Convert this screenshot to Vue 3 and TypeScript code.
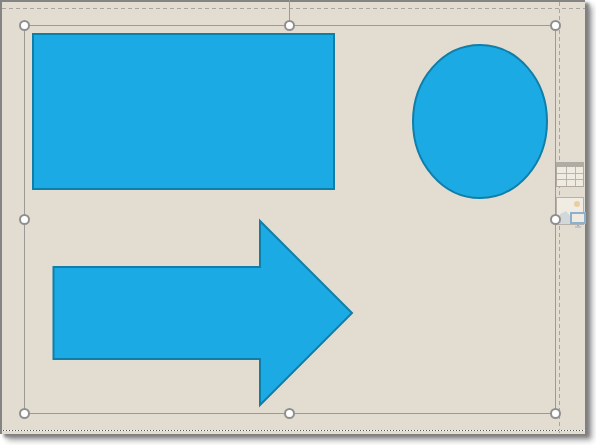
<script setup lang="ts">
const handles: [number, number][] = [
  [24.5, 25.5], [289.5, 25.5], [555.5, 25.5],
  [24.5, 219.5], [555.5, 219.5],
  [24.5, 413.5], [289.5, 413.5], [555.5, 413.5],
]
const tableRows = [173.5, 179.5]
const tableCols = [566.5, 575.5]
</script>

<template>
  <div class="page">
    <div class="slide">
      <svg class="canvas" width="596" height="445" viewBox="0 0 596 445">
        <!-- guides -->
        <line x1="2" y1="8.5" x2="585" y2="8.5" class="guide" />
        <line x1="559.5" y1="2" x2="559.5" y2="434" class="guide" />
        <line x1="2" y1="430.5" x2="585" y2="430.5" class="edge-light" />
        <line x1="3" y1="430.5" x2="585" y2="430.5" class="edge" />

        <!-- shapes -->
        <rect x="33" y="34" width="301" height="155" class="shape" />
        <ellipse cx="480" cy="121.5" rx="67" ry="76.5" class="shape" />
        <polygon points="53.5,267 260,267 260,221 352,313 260,405 260,359 53.5,359" class="shape" />

        <!-- side thumbnails -->
        <g>
          <rect x="556.5" y="162.5" width="27" height="24" class="thumb-table" />
          <rect x="556" y="162" width="28" height="5" fill="#b0aca4" />
          <line v-for="y in tableRows" :key="y" x1="557" :y1="y" x2="583" :y2="y" class="thumb-line" />
          <line v-for="x in tableCols" :key="x" :x1="x" y1="167" :x2="x" y2="186" class="thumb-line" />
          <rect x="556.5" y="197.5" width="27" height="27" class="thumb-pic" />
          <circle cx="577" cy="204" r="3" fill="#e8cfa2" />
          <polygon points="560,224 560,214 566,211 572,218 572,224" fill="#d2d8da" />
          <rect x="571" y="213" width="14" height="10" class="thumb-screen" />
          <rect x="577" y="225" width="2" height="1" fill="#8fb0cc" />
          <rect x="575" y="226.5" width="6" height="1" fill="#8fb0cc" />
        </g>

        <!-- selection frame -->
        <line x1="289.5" y1="0" x2="289.5" y2="25" class="frame" />
        <rect x="24.5" y="25.5" width="531" height="388" class="frame" />
        <circle v-for="h in handles" :key="h[0] + '-' + h[1]" :cx="h[0]" :cy="h[1]" r="4.5" class="handle" />
      </svg>
    </div>
  </div>
</template>

<style scoped>
.page {
  position: relative;
  width: 596px;
  height: 445px;
  background: #ffffff;
  overflow: hidden;
}
.slide {
  position: relative;
  width: 583px;
  height: 432px;
  background: #e3ddd1;
  border-top: 2px solid #848484;
  border-left: 2px solid #848484;
  box-shadow: 4px 3px 3px #7f7f7f, 7px 6px 6px #a0a0a0;
}
.canvas {
  position: absolute;
  left: -2px;
  top: -2px;
  display: block;
}
.guide {
  stroke: #a8a59e;
  stroke-width: 1;
  stroke-dasharray: 4 3;
  fill: none;
}
.edge-light {
  stroke: #f4f1ea;
  stroke-width: 1;
  fill: none;
}
.edge {
  stroke: #55544f;
  stroke-width: 1;
  stroke-dasharray: 1 2;
  fill: none;
}
.shape {
  fill: #1caae4;
  stroke: #0f7fa9;
  stroke-width: 2;
}
.frame {
  fill: none;
  stroke: #9a9a98;
  stroke-width: 1;
}
.handle {
  fill: #ffffff;
  stroke: #8f8f8f;
  stroke-width: 2;
}
.thumb-table {
  fill: #efebe1;
  stroke: #b0aca4;
  stroke-width: 1;
}
.thumb-line {
  stroke: #b9b5ac;
  stroke-width: 1;
}
.thumb-pic {
  fill: #f0ece3;
  stroke: #b5b1a8;
  stroke-width: 1;
}
.thumb-screen {
  fill: #efebe1;
  stroke: #8fb0cc;
  stroke-width: 2;
}
</style>
